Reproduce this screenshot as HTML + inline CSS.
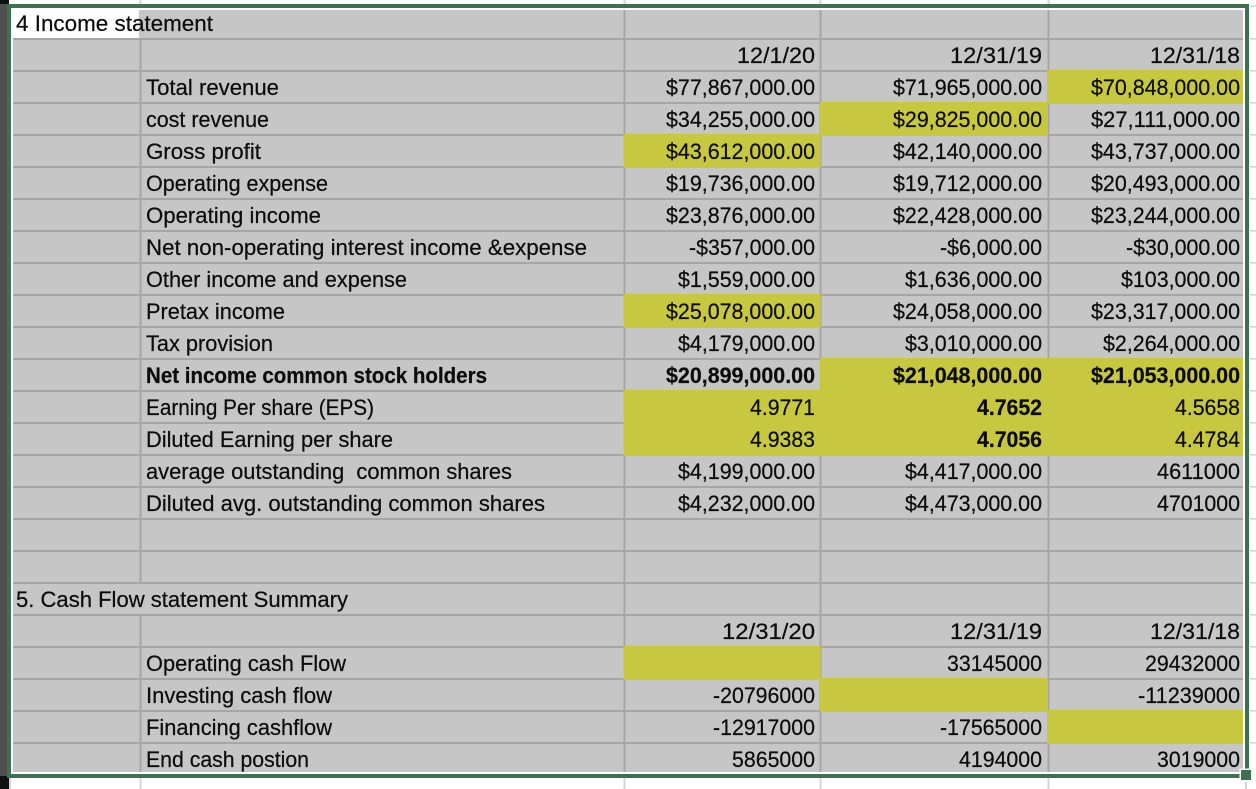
<!DOCTYPE html>
<html>
<head>
<meta charset="utf-8">
<style>
html,body{margin:0;padding:0;background:#fff;width:1256px;height:789px;overflow:hidden}
svg{display:block}
text{font-family:"Liberation Sans",sans-serif;font-size:21.8px;fill:#0c0c0c;stroke:#0c0c0c;stroke-width:.22px;white-space:pre}
.b{font-weight:bold}
</style>
</head>
<body>
<svg width="1256" height="789" viewBox="0 0 1256 789" xmlns="http://www.w3.org/2000/svg">
<rect width="1256" height="789" fill="#fff"/>
<!-- outer sheet stubs -->
<g fill="#d6d6d6">
<rect x="139.5" y="0" width="2" height="5"/><rect x="623.5" y="0" width="2" height="5"/><rect x="819.5" y="0" width="2" height="5"/><rect x="1047.5" y="0" width="2" height="5"/>
<rect x="9" y="778" width="2" height="11"/><rect x="139.5" y="778" width="2" height="11"/><rect x="623.5" y="778" width="2" height="11"/><rect x="819.5" y="778" width="2" height="11"/><rect x="1047.5" y="778" width="2" height="11"/><rect x="1245" y="780" width="2" height="9"/>
<rect x="1250" y="5.5" width="6" height="1.6"/><rect x="1250" y="38" width="6" height="1.6"/><rect x="1250" y="70" width="6" height="1.6"/><rect x="1250" y="102" width="6" height="1.6"/><rect x="1250" y="134" width="6" height="1.6"/><rect x="1250" y="166" width="6" height="1.6"/><rect x="1250" y="198" width="6" height="1.6"/><rect x="1250" y="230" width="6" height="1.6"/><rect x="1250" y="262" width="6" height="1.6"/><rect x="1250" y="294" width="6" height="1.6"/><rect x="1250" y="326" width="6" height="1.6"/><rect x="1250" y="358" width="6" height="1.6"/><rect x="1250" y="390" width="6" height="1.6"/><rect x="1250" y="422" width="6" height="1.6"/><rect x="1250" y="454" width="6" height="1.6"/><rect x="1250" y="486" width="6" height="1.6"/><rect x="1250" y="518" width="6" height="1.6"/><rect x="1250" y="550" width="6" height="1.6"/><rect x="1250" y="582" width="6" height="1.6"/><rect x="1250" y="614" width="6" height="1.6"/><rect x="1250" y="646" width="6" height="1.6"/><rect x="1250" y="678" width="6" height="1.6"/><rect x="1250" y="710" width="6" height="1.6"/><rect x="1250" y="742" width="6" height="1.6"/>
</g>
<!-- left strip -->
<rect x="0" y="0" width="7" height="789" fill="#505050"/>
<rect x="0" y="0" width="9" height="4" fill="#111"/>
<rect x="0" y="776" width="9" height="13" fill="#111"/>
<!-- sheet -->
<rect x="11" y="8" width="1234" height="766" fill="#fff"/>
<rect x="13" y="38" width="1230" height="734" fill="#c6c6c6"/>
<rect x="139" y="10" width="1104" height="30" fill="#c6c6c6"/>
<!-- grid -->
<g fill="#a6a6a6">
<rect x="13" y="38" width="1230" height="2"/><rect x="13" y="70" width="1230" height="2"/><rect x="13" y="102" width="1230" height="2"/><rect x="13" y="134" width="1230" height="2"/><rect x="13" y="166" width="1230" height="2"/><rect x="13" y="198" width="1230" height="2"/><rect x="13" y="230" width="1230" height="2"/><rect x="13" y="262" width="1230" height="2"/><rect x="13" y="294" width="1230" height="2"/><rect x="13" y="326" width="1230" height="2"/><rect x="13" y="358" width="1230" height="2"/><rect x="13" y="390" width="1230" height="2"/><rect x="13" y="422" width="1230" height="2"/><rect x="13" y="454" width="1230" height="2"/><rect x="13" y="486" width="1230" height="2"/><rect x="13" y="518" width="1230" height="2"/><rect x="13" y="550" width="1230" height="2"/><rect x="13" y="582" width="1230" height="2"/><rect x="13" y="614" width="1230" height="2"/><rect x="13" y="646" width="1230" height="2"/><rect x="13" y="678" width="1230" height="2"/><rect x="13" y="710" width="1230" height="2"/><rect x="13" y="742" width="1230" height="2"/>
<rect x="139.5" y="38" width="2" height="544"/>
<rect x="139.5" y="614" width="2" height="158"/>
<rect x="623.5" y="10" width="2" height="762"/>
<rect x="819.5" y="10" width="2" height="762"/>
<rect x="1047.5" y="10" width="2" height="762"/>
</g>
<!-- yellow cells -->
<g fill="#c8c840">
<rect x="1047" y="70" width="196" height="34"/>
<rect x="820" y="102" width="228" height="34"/>
<rect x="623.5" y="134" width="197" height="34"/>
<rect x="623.5" y="294" width="197" height="34"/>
<rect x="819.5" y="358" width="423.5" height="34"/>
<rect x="623.5" y="390" width="619.5" height="66"/>
<rect x="623.5" y="646" width="197" height="34"/>
<rect x="820" y="678" width="228" height="34"/>
<rect x="1047" y="710" width="196" height="34"/>
</g>
<!-- selection -->
<rect x="9" y="6" width="1238" height="770" fill="none" stroke="#3d7150" stroke-width="4"/>
<rect x="1239.5" y="768.5" width="13" height="13" fill="#fff"/>
<rect x="1241" y="770" width="10" height="10" fill="#3d7150"/>
<!-- labels -->
<g>
<text x="16" y="31" textLength="197" lengthAdjust="spacingAndGlyphs">4 Income statement</text>
<text x="146" y="95" textLength="133" lengthAdjust="spacingAndGlyphs">Total revenue</text>
<text x="146" y="127" textLength="123" lengthAdjust="spacingAndGlyphs">cost revenue</text>
<text x="146" y="159" textLength="115" lengthAdjust="spacingAndGlyphs">Gross profit</text>
<text x="146" y="191" textLength="182" lengthAdjust="spacingAndGlyphs">Operating expense</text>
<text x="146" y="223" textLength="175" lengthAdjust="spacingAndGlyphs">Operating income</text>
<text x="146" y="255" textLength="441" lengthAdjust="spacingAndGlyphs">Net non-operating interest income &amp;expense</text>
<text x="146" y="287" textLength="261" lengthAdjust="spacingAndGlyphs">Other income and expense</text>
<text x="146" y="319" textLength="139" lengthAdjust="spacingAndGlyphs">Pretax income</text>
<text x="146" y="351" textLength="127" lengthAdjust="spacingAndGlyphs">Tax provision</text>
<text class="b" x="146" y="383" textLength="341" lengthAdjust="spacingAndGlyphs">Net income common stock holders</text>
<text x="146" y="415" textLength="228" lengthAdjust="spacingAndGlyphs">Earning Per share (EPS)</text>
<text x="146" y="447" textLength="247" lengthAdjust="spacingAndGlyphs">Diluted Earning per share</text>
<text x="146" y="479" textLength="366" lengthAdjust="spacingAndGlyphs">average outstanding  common shares</text>
<text x="146" y="511" textLength="399" lengthAdjust="spacingAndGlyphs">Diluted avg. outstanding common shares</text>
<text x="16" y="607" textLength="332" lengthAdjust="spacingAndGlyphs">5. Cash Flow statement Summary</text>
<text x="146" y="671" textLength="200" lengthAdjust="spacingAndGlyphs">Operating cash Flow</text>
<text x="146" y="703" textLength="186" lengthAdjust="spacingAndGlyphs">Investing cash flow</text>
<text x="146" y="735" textLength="186" lengthAdjust="spacingAndGlyphs">Financing cashflow</text>
<text x="146" y="767" textLength="163" lengthAdjust="spacingAndGlyphs">End cash postion</text>
</g>
<!-- column 1 -->
<text x="737" y="63" textLength="78" lengthAdjust="spacingAndGlyphs">12/1/20</text>
<text x="666" y="95" textLength="149" lengthAdjust="spacingAndGlyphs">$77,867,000.00</text>
<text x="666" y="127" textLength="149" lengthAdjust="spacingAndGlyphs">$34,255,000.00</text>
<text x="666" y="159" textLength="149" lengthAdjust="spacingAndGlyphs">$43,612,000.00</text>
<text x="666" y="191" textLength="149" lengthAdjust="spacingAndGlyphs">$19,736,000.00</text>
<text x="666" y="223" textLength="149" lengthAdjust="spacingAndGlyphs">$23,876,000.00</text>
<text x="689" y="255" textLength="126" lengthAdjust="spacingAndGlyphs">-$357,000.00</text>
<text x="678" y="287" textLength="137" lengthAdjust="spacingAndGlyphs">$1,559,000.00</text>
<text x="666" y="319" textLength="149" lengthAdjust="spacingAndGlyphs">$25,078,000.00</text>
<text x="678" y="351" textLength="137" lengthAdjust="spacingAndGlyphs">$4,179,000.00</text>
<text class="b" x="666" y="383" textLength="149" lengthAdjust="spacingAndGlyphs">$20,899,000.00</text>
<text x="750" y="415" textLength="65" lengthAdjust="spacingAndGlyphs">4.9771</text>
<text x="750" y="447" textLength="65" lengthAdjust="spacingAndGlyphs">4.9383</text>
<text x="678" y="479" textLength="137" lengthAdjust="spacingAndGlyphs">$4,199,000.00</text>
<text x="678" y="511" textLength="137" lengthAdjust="spacingAndGlyphs">$4,232,000.00</text>
<text x="722" y="639" textLength="93" lengthAdjust="spacingAndGlyphs">12/31/20</text>
<text x="713" y="703" textLength="102" lengthAdjust="spacingAndGlyphs">-20796000</text>
<text x="713" y="735" textLength="102" lengthAdjust="spacingAndGlyphs">-12917000</text>
<text x="732" y="767" textLength="83" lengthAdjust="spacingAndGlyphs">5865000</text>
<!-- column 2 -->
<text x="950" y="63" textLength="92" lengthAdjust="spacingAndGlyphs">12/31/19</text>
<text x="893" y="95" textLength="149" lengthAdjust="spacingAndGlyphs">$71,965,000.00</text>
<text x="893" y="127" textLength="149" lengthAdjust="spacingAndGlyphs">$29,825,000.00</text>
<text x="893" y="159" textLength="149" lengthAdjust="spacingAndGlyphs">$42,140,000.00</text>
<text x="893" y="191" textLength="149" lengthAdjust="spacingAndGlyphs">$19,712,000.00</text>
<text x="893" y="223" textLength="149" lengthAdjust="spacingAndGlyphs">$22,428,000.00</text>
<text x="940" y="255" textLength="102" lengthAdjust="spacingAndGlyphs">-$6,000.00</text>
<text x="905" y="287" textLength="137" lengthAdjust="spacingAndGlyphs">$1,636,000.00</text>
<text x="893" y="319" textLength="149" lengthAdjust="spacingAndGlyphs">$24,058,000.00</text>
<text x="905" y="351" textLength="137" lengthAdjust="spacingAndGlyphs">$3,010,000.00</text>
<text class="b" x="893" y="383" textLength="149" lengthAdjust="spacingAndGlyphs">$21,048,000.00</text>
<text class="b" x="977" y="415" textLength="65" lengthAdjust="spacingAndGlyphs">4.7652</text>
<text class="b" x="977" y="447" textLength="65" lengthAdjust="spacingAndGlyphs">4.7056</text>
<text x="905" y="479" textLength="137" lengthAdjust="spacingAndGlyphs">$4,417,000.00</text>
<text x="905" y="511" textLength="137" lengthAdjust="spacingAndGlyphs">$4,473,000.00</text>
<text x="950" y="639" textLength="92" lengthAdjust="spacingAndGlyphs">12/31/19</text>
<text x="947" y="671" textLength="95" lengthAdjust="spacingAndGlyphs">33145000</text>
<text x="940" y="735" textLength="102" lengthAdjust="spacingAndGlyphs">-17565000</text>
<text x="959" y="767" textLength="83" lengthAdjust="spacingAndGlyphs">4194000</text>
<!-- column 3 -->
<text x="1150" y="63" textLength="90" lengthAdjust="spacingAndGlyphs">12/31/18</text>
<text x="1091" y="95" textLength="149" lengthAdjust="spacingAndGlyphs">$70,848,000.00</text>
<text x="1091" y="127" textLength="149" lengthAdjust="spacingAndGlyphs">$27,111,000.00</text>
<text x="1091" y="159" textLength="149" lengthAdjust="spacingAndGlyphs">$43,737,000.00</text>
<text x="1091" y="191" textLength="149" lengthAdjust="spacingAndGlyphs">$20,493,000.00</text>
<text x="1091" y="223" textLength="149" lengthAdjust="spacingAndGlyphs">$23,244,000.00</text>
<text x="1126" y="255" textLength="114" lengthAdjust="spacingAndGlyphs">-$30,000.00</text>
<text x="1121" y="287" textLength="119" lengthAdjust="spacingAndGlyphs">$103,000.00</text>
<text x="1091" y="319" textLength="149" lengthAdjust="spacingAndGlyphs">$23,317,000.00</text>
<text x="1103" y="351" textLength="137" lengthAdjust="spacingAndGlyphs">$2,264,000.00</text>
<text class="b" x="1091" y="383" textLength="149" lengthAdjust="spacingAndGlyphs">$21,053,000.00</text>
<text x="1175" y="415" textLength="65" lengthAdjust="spacingAndGlyphs">4.5658</text>
<text x="1175" y="447" textLength="65" lengthAdjust="spacingAndGlyphs">4.4784</text>
<text x="1157" y="479" textLength="83" lengthAdjust="spacingAndGlyphs">4611000</text>
<text x="1157" y="511" textLength="83" lengthAdjust="spacingAndGlyphs">4701000</text>
<text x="1150" y="639" textLength="90" lengthAdjust="spacingAndGlyphs">12/31/18</text>
<text x="1145" y="671" textLength="95" lengthAdjust="spacingAndGlyphs">29432000</text>
<text x="1138" y="703" textLength="102" lengthAdjust="spacingAndGlyphs">-11239000</text>
<text x="1157" y="767" textLength="83" lengthAdjust="spacingAndGlyphs">3019000</text>
</svg>
</body>
</html>
